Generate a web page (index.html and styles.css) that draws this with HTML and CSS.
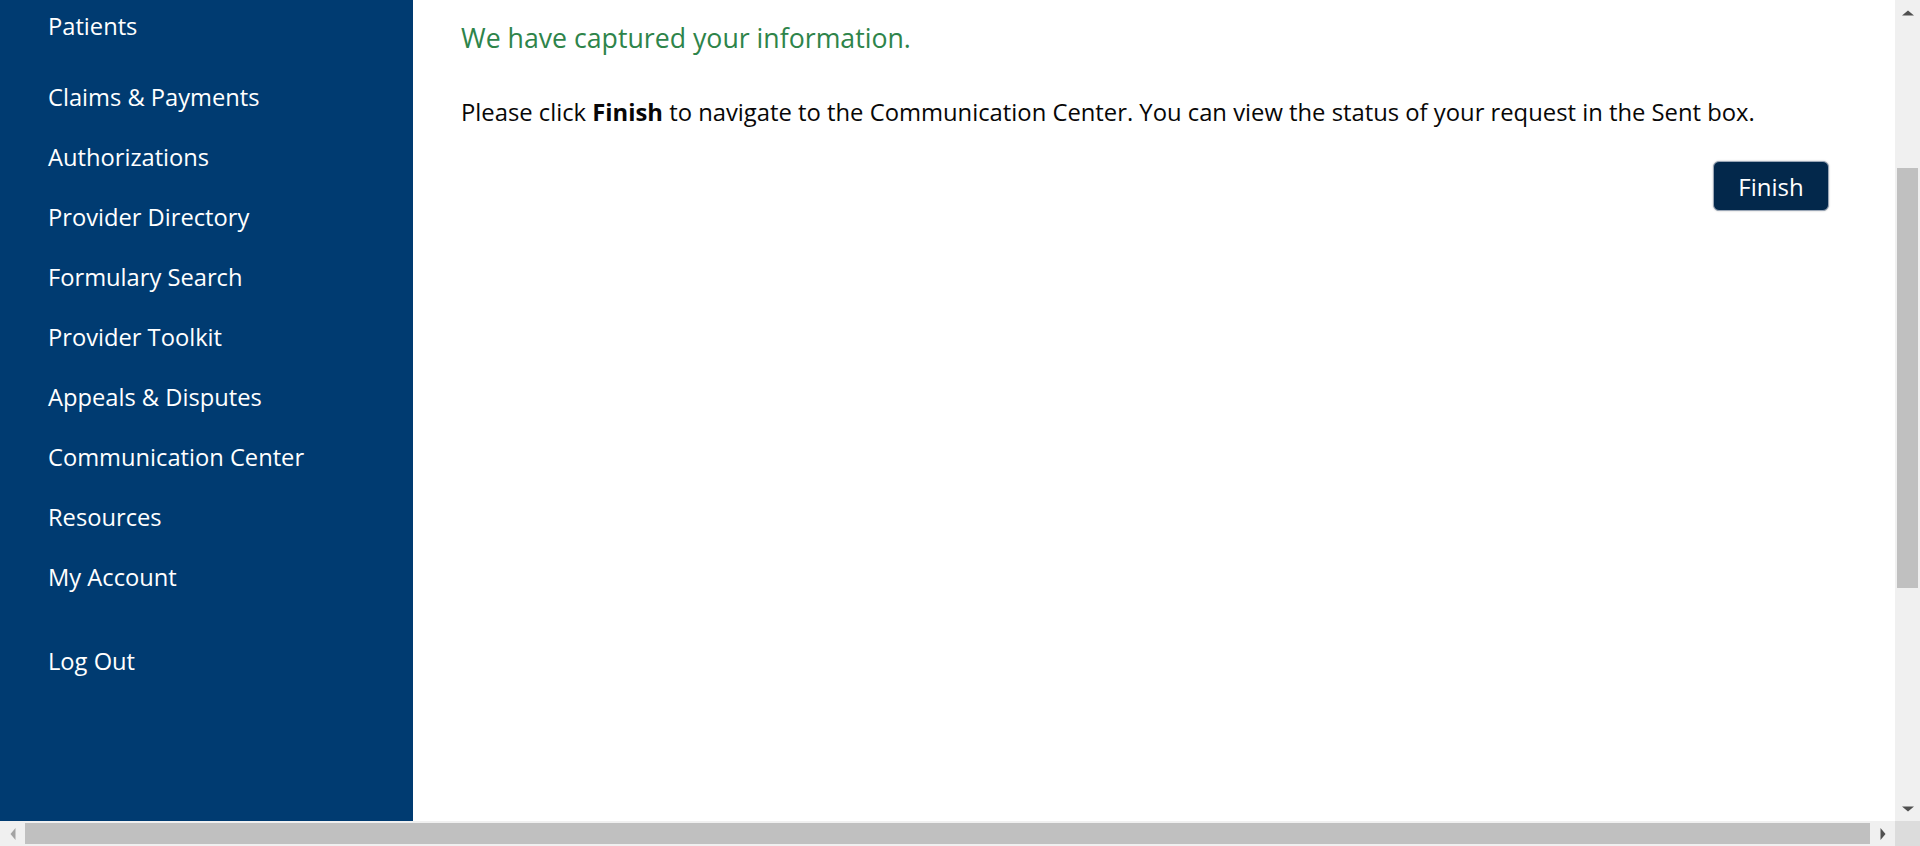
FILE: index.html
```html
<!DOCTYPE html>
<html lang="en">
<head>
<meta charset="utf-8">
<title>Communication Center</title>
<link rel="stylesheet" href="styles.css">
</head>
<body>
<div class="window">
  <div class="viewport">
    <aside class="sidebar">
      <ul class="nav">
        <li class="nav-item nav-item--first"><a href="#">Patients</a></li>
        <li class="nav-item"><a href="#">Claims &amp; Payments</a></li>
        <li class="nav-item"><a href="#">Authorizations</a></li>
        <li class="nav-item"><a href="#">Provider Directory</a></li>
        <li class="nav-item"><a href="#">Formulary Search</a></li>
        <li class="nav-item"><a href="#">Provider Toolkit</a></li>
        <li class="nav-item"><a href="#">Appeals &amp; Disputes</a></li>
        <li class="nav-item"><a href="#">Communication Center</a></li>
        <li class="nav-item"><a href="#">Resources</a></li>
        <li class="nav-item"><a href="#">My Account</a></li>
      </ul>
      <ul class="nav nav--secondary">
        <li class="nav-item"><a href="#">Log Out</a></li>
      </ul>
    </aside>
    <main class="content">
      <h2 class="success">We have captured your information.</h2>
      <p class="message">Please click <strong>Finish</strong> to navigate to the Communication Center. You can view the status of your request in the Sent box.</p>
      <div class="actions">
        <button class="btn-finish" type="button">Finish</button>
      </div>
    </main>
  </div>
  <div class="vscroll">
    <div class="arrow arrow--up"></div>
    <div class="vtrack"><div class="vthumb"></div></div>
    <div class="arrow arrow--down"></div>
  </div>
  <div class="hscroll">
    <div class="arrow arrow--left"></div>
    <div class="htrack"><div class="hthumb"></div></div>
    <div class="arrow arrow--right"></div>
  </div>
  <div class="corner"></div>
</div>
</body>
</html>
```
FILE: styles.css
```css
html, body {
  margin: 0;
  padding: 0;
  height: 100%;
  overflow: hidden;
}
body {
  font-family: "Open Sans", Lato, "Liberation Sans", sans-serif;
  background: #ffffff;
}
.window {
  width: 1920px;
  height: 846px;
  display: grid;
  grid-template-columns: 1fr 25px;
  grid-template-rows: 1fr 25px;
}
.viewport {
  display: flex;
  overflow: hidden;
  min-height: 0;
}
.sidebar {
  width: 413px;
  flex: 0 0 413px;
  background: #003b71;
  padding-left: 48px;
  box-sizing: border-box;
}
.nav {
  list-style: none;
  margin: -4px 0 0 0;
  padding: 0;
}
.nav--secondary {
  margin-top: 24px;
}
.nav-item {
  font-size: 23.7px;
  line-height: 60px;
}
.nav-item--first {
  margin-bottom: 11px;
}
.nav-item a {
  color: #ffffff;
  text-decoration: none;
}
.content {
  flex: 1;
  padding: 22px 66px 0 48px;
  box-sizing: border-box;
}
.success {
  margin: 0;
  font-size: 26.7px;
  font-weight: 400;
  line-height: 32px;
  color: #2e844a;
}
.message {
  margin: 43px 0 0 0;
  font-size: 23.8px;
  line-height: 30px;
  color: #080707;
}
.message strong {
  font-weight: 700;
}
.actions {
  display: flex;
  justify-content: flex-end;
  margin-top: 34px;
}
.btn-finish {
  width: 116px;
  height: 50px;
  background: #03284b;
  color: #ffffff;
  font-family: inherit;
  font-size: 24px;
  border: 1px solid #9aa6b6;
  border-radius: 6px;
  box-shadow: 0 0 2px rgba(0, 0, 0, 0.25);
  padding: 0;
}
/* fake browser scrollbars */
.vscroll {
  background: #f0f0f0;
  display: flex;
  flex-direction: column;
}
.vtrack {
  flex: 1;
  padding: 143px 2px 0 2px;
}
.vthumb {
  height: 420px;
  background: #c0c0c0;
}
.hscroll {
  background: #f0f0f0;
  display: flex;
  align-items: stretch;
}
.htrack {
  flex: 1;
  padding: 2px 0;
  display: flex;
}
.hthumb {
  flex: 1;
  background: #c0c0c0;
}
.corner {
  background: #dcdcdc;
}
.arrow {
  flex: 0 0 25px;
  width: 25px;
  height: 25px;
  position: relative;
}
.arrow::after {
  content: "";
  position: absolute;
  width: 0;
  height: 0;
  left: 50%;
  top: 50%;
}
.arrow--up::after {
  border-left: 6px solid transparent;
  border-right: 6px solid transparent;
  border-bottom: 5px solid #505050;
  transform: translate(-50%, -50%);
}
.arrow--down::after {
  border-left: 6px solid transparent;
  border-right: 6px solid transparent;
  border-top: 5px solid #505050;
  transform: translate(-50%, -50%);
}
.arrow--left::after {
  border-top: 6px solid transparent;
  border-bottom: 6px solid transparent;
  border-right: 5px solid #a3a3a3;
  transform: translate(-50%, -50%);
}
.arrow--right::after {
  border-top: 6px solid transparent;
  border-bottom: 6px solid transparent;
  border-left: 5px solid #505050;
  transform: translate(-50%, -50%);
}
```
